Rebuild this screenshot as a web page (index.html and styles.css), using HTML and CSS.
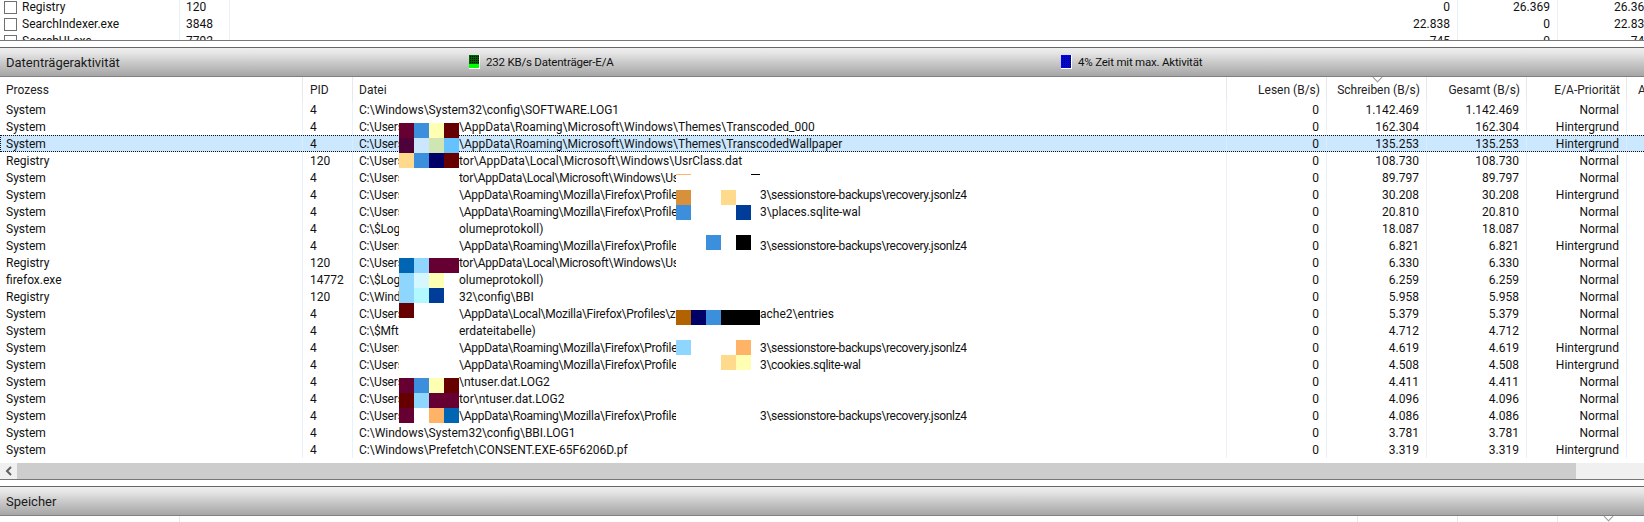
FILE: index.html
```html
<!DOCTYPE html>
<html lang="de">
<head>
<meta charset="utf-8">
<title>Ressourcenmonitor</title>
<link rel="stylesheet" href="styles.css">
</head>
<body>
<div class="app">
  <section class="upper">
    <div class="urow"><span class="chk"></span><span class="uname">Registry</span><span class="upid">120</span><span class="num1">0</span><span class="num2">26.369</span><span class="num3">26.369</span></div>
    <div class="urow"><span class="chk"></span><span class="uname">SearchIndexer.exe</span><span class="upid">3848</span><span class="num1">22.838</span><span class="num2">0</span><span class="num3">22.838</span></div>
    <div class="urow"><span class="chk"></span><span class="uname">SearchUI.exe</span><span class="upid">7792</span><span class="num1">745</span><span class="num2">0</span><span class="num3">745</span></div>
  </section>
  <div class="gap"></div>
  <header class="bar">
    <span class="title">Datenträgeraktivität</span>
    <span class="stat stat-a"><span class="meter meter-green"></span>232 KB/s Datenträger-E/A</span>
    <span class="stat stat-b"><span class="meter meter-blue"></span>4% Zeit mit max. Aktivität</span>
  </header>
  <div class="thead">
    <span class="c-proc">Prozess</span><span class="c-pid">PID</span><span class="c-file">Datei</span><span class="c-n r">Lesen (B/s)</span><span class="c-n r sorted">Schreiben (B/s)</span><span class="c-n r">Gesamt (B/s)</span><span class="c-n r">E/A-Priorität</span><span class="c-last">A</span>
  </div>
  <div class="tbody">
    <div class="trow"><span class="c-proc">System</span><span class="c-pid">4</span><span class="c-file">C:\Windows\System32\config\SOFTWARE.LOG1</span><span class="c-n r">0</span><span class="c-n r">1.142.469</span><span class="c-n r">1.142.469</span><span class="c-n r">Normal</span></div>
    <div class="trow"><span class="c-proc">System</span><span class="c-pid">4</span><span class="c-file"><span class="seg s1">C:\Users</span><span class="seg s2 open">\AppData\Roaming\Microsoft\Windows\Themes\Transcoded_000</span></span><span class="c-n r">0</span><span class="c-n r">162.304</span><span class="c-n r">162.304</span><span class="c-n r">Hintergrund</span></div>
    <div class="trow sel"><span class="c-proc">System</span><span class="c-pid">4</span><span class="c-file"><span class="seg s1">C:\Users</span><span class="seg s2 open">\AppData\Roaming\Microsoft\Windows\Themes\TranscodedWallpaper</span></span><span class="c-n r">0</span><span class="c-n r">135.253</span><span class="c-n r">135.253</span><span class="c-n r">Hintergrund</span></div>
    <div class="trow"><span class="c-proc">Registry</span><span class="c-pid">120</span><span class="c-file"><span class="seg s1">C:\Users</span><span class="seg s2 open">tor\AppData\Local\Microsoft\Windows\UsrClass.dat</span></span><span class="c-n r">0</span><span class="c-n r">108.730</span><span class="c-n r">108.730</span><span class="c-n r">Normal</span></div>
    <div class="trow"><span class="c-proc">System</span><span class="c-pid">4</span><span class="c-file"><span class="seg s1">C:\Users</span><span class="seg s2">tor\AppData\Local\Microsoft\Windows\UsrClass.dat</span></span><span class="c-n r">0</span><span class="c-n r">89.797</span><span class="c-n r">89.797</span><span class="c-n r">Normal</span></div>
    <div class="trow"><span class="c-proc">System</span><span class="c-pid">4</span><span class="c-file"><span class="seg s1">C:\Users</span><span class="seg s2">\AppData\Roaming\Mozilla\Firefox\Profiles</span><span class="seg s3 tight">3\sessionstore-backups\recovery.jsonlz4</span></span><span class="c-n r">0</span><span class="c-n r">30.208</span><span class="c-n r">30.208</span><span class="c-n r">Hintergrund</span></div>
    <div class="trow"><span class="c-proc">System</span><span class="c-pid">4</span><span class="c-file"><span class="seg s1">C:\Users</span><span class="seg s2">\AppData\Roaming\Mozilla\Firefox\Profiles</span><span class="seg s3">3\places.sqlite-wal</span></span><span class="c-n r">0</span><span class="c-n r">20.810</span><span class="c-n r">20.810</span><span class="c-n r">Normal</span></div>
    <div class="trow"><span class="c-proc">System</span><span class="c-pid">4</span><span class="c-file"><span class="seg s1">C:\$LogFile</span><span class="seg s2 open">olumeprotokoll)</span></span><span class="c-n r">0</span><span class="c-n r">18.087</span><span class="c-n r">18.087</span><span class="c-n r">Normal</span></div>
    <div class="trow"><span class="c-proc">System</span><span class="c-pid">4</span><span class="c-file"><span class="seg s1">C:\Users</span><span class="seg s2">\AppData\Roaming\Mozilla\Firefox\Profiles</span><span class="seg s3 tight">3\sessionstore-backups\recovery.jsonlz4</span></span><span class="c-n r">0</span><span class="c-n r">6.821</span><span class="c-n r">6.821</span><span class="c-n r">Hintergrund</span></div>
    <div class="trow"><span class="c-proc">Registry</span><span class="c-pid">120</span><span class="c-file"><span class="seg s1">C:\Users</span><span class="seg s2">tor\AppData\Local\Microsoft\Windows\UsrClass.dat</span></span><span class="c-n r">0</span><span class="c-n r">6.330</span><span class="c-n r">6.330</span><span class="c-n r">Normal</span></div>
    <div class="trow"><span class="c-proc">firefox.exe</span><span class="c-pid">14772</span><span class="c-file"><span class="seg s1">C:\$LogFile</span><span class="seg s2 open">olumeprotokoll)</span></span><span class="c-n r">0</span><span class="c-n r">6.259</span><span class="c-n r">6.259</span><span class="c-n r">Normal</span></div>
    <div class="trow"><span class="c-proc">Registry</span><span class="c-pid">120</span><span class="c-file"><span class="seg s1">C:\Windows</span><span class="seg s2 open">32\config\BBI</span></span><span class="c-n r">0</span><span class="c-n r">5.958</span><span class="c-n r">5.958</span><span class="c-n r">Normal</span></div>
    <div class="trow"><span class="c-proc">System</span><span class="c-pid">4</span><span class="c-file"><span class="seg s1">C:\Users</span><span class="seg s2">\AppData\Local\Mozilla\Firefox\Profiles\zc</span><span class="seg s3">ache2\entries</span></span><span class="c-n r">0</span><span class="c-n r">5.379</span><span class="c-n r">5.379</span><span class="c-n r">Normal</span></div>
    <div class="trow"><span class="c-proc">System</span><span class="c-pid">4</span><span class="c-file"><span class="seg s1">C:\$Mft</span><span class="seg s2 open">erdateitabelle)</span></span><span class="c-n r">0</span><span class="c-n r">4.712</span><span class="c-n r">4.712</span><span class="c-n r">Normal</span></div>
    <div class="trow"><span class="c-proc">System</span><span class="c-pid">4</span><span class="c-file"><span class="seg s1">C:\Users</span><span class="seg s2">\AppData\Roaming\Mozilla\Firefox\Profiles</span><span class="seg s3 tight">3\sessionstore-backups\recovery.jsonlz4</span></span><span class="c-n r">0</span><span class="c-n r">4.619</span><span class="c-n r">4.619</span><span class="c-n r">Hintergrund</span></div>
    <div class="trow"><span class="c-proc">System</span><span class="c-pid">4</span><span class="c-file"><span class="seg s1">C:\Users</span><span class="seg s2">\AppData\Roaming\Mozilla\Firefox\Profiles</span><span class="seg s3 tight">3\cookies.sqlite-wal</span></span><span class="c-n r">0</span><span class="c-n r">4.508</span><span class="c-n r">4.508</span><span class="c-n r">Hintergrund</span></div>
    <div class="trow"><span class="c-proc">System</span><span class="c-pid">4</span><span class="c-file"><span class="seg s1">C:\Users</span><span class="seg s2 open">\ntuser.dat.LOG2</span></span><span class="c-n r">0</span><span class="c-n r">4.411</span><span class="c-n r">4.411</span><span class="c-n r">Normal</span></div>
    <div class="trow"><span class="c-proc">System</span><span class="c-pid">4</span><span class="c-file"><span class="seg s1">C:\Users</span><span class="seg s2 open">tor\ntuser.dat.LOG2</span></span><span class="c-n r">0</span><span class="c-n r">4.096</span><span class="c-n r">4.096</span><span class="c-n r">Normal</span></div>
    <div class="trow"><span class="c-proc">System</span><span class="c-pid">4</span><span class="c-file"><span class="seg s1">C:\Users</span><span class="seg s2">\AppData\Roaming\Mozilla\Firefox\Profiles</span><span class="seg s3 tight">3\sessionstore-backups\recovery.jsonlz4</span></span><span class="c-n r">0</span><span class="c-n r">4.086</span><span class="c-n r">4.086</span><span class="c-n r">Normal</span></div>
    <div class="trow"><span class="c-proc">System</span><span class="c-pid">4</span><span class="c-file">C:\Windows\System32\config\BBI.LOG1</span><span class="c-n r">0</span><span class="c-n r">3.781</span><span class="c-n r">3.781</span><span class="c-n r">Normal</span></div>
    <div class="trow"><span class="c-proc">System</span><span class="c-pid">4</span><span class="c-file">C:\Windows\Prefetch\CONSENT.EXE-65F6206D.pf</span><span class="c-n r">0</span><span class="c-n r">3.319</span><span class="c-n r">3.319</span><span class="c-n r">Hintergrund</span></div>

    <div class="mos mos-a"><i class="p"></i><i class="b"></i><i class="y"></i><i class="m"></i><i class="d"></i><i class="lb"></i><i class="g"></i><i class="s"></i><i class="o"></i><i class="b"></i><i class="n"></i><i class="m"></i></div>
    <div class="mos mos-b"><i class="c"></i><i class="sk"></i><i class="p"></i><i class="p"></i><i class="sk"></i><i class="pb"></i><i class="y"></i><i></i><i class="sk"></i><i class="cy"></i><i class="t"></i><i></i><i class="m"></i></div>
    <div class="mos mos-c"><i class="p"></i><i class="b"></i><i class="y"></i><i class="m"></i><i class="m"></i><i class="sk"></i><i class="p"></i><i class="p"></i><i class="p"></i><i></i><i class="po"></i><i class="c"></i></div>
    <div class="mos mos-d"><i class="or"></i><i></i><i></i><i class="o"></i><i></i><i class="b"></i><i></i><i></i><i></i><i class="t"></i></div>
    <div class="mos mos-e"><i></i><i></i><i class="b"></i><i></i><i class="k"></i></div>
    <div class="mos mos-f"><i class="br"></i><i class="n"></i><i class="b"></i><i class="k"></i><i class="k long"></i></div>
    <div class="mos mos-g"><i class="sk"></i><i></i><i></i><i></i><i class="po"></i><i></i><i></i><i></i><i class="o"></i><i class="y"></i></div>
    <span class="line line-o"></span><span class="line line-k"></span>
  </div>
  <div class="scroll"><span class="arrow"><svg width="9" height="10" viewBox="0 0 9 10"><path d="M7 1 3 5l4 4" fill="none" stroke="#606060" stroke-width="2"/></svg></span><span class="thumb"></span><span class="rest"></span></div>
  <div class="gap"></div>
  <header class="bar"><span class="title">Speicher</span></header>
  <div class="lower"><span class="l1"></span><span class="l2"></span><span class="l3"></span><span class="l4"></span><span class="l5"></span></div>
</div>
</body>
</html>
```
FILE: styles.css
```css
* { box-sizing: border-box; }
html, body { margin: 0; height: 100%; background: #fff; overflow: hidden; }
body { font: 12px/17px Roboto, "Noto Sans", sans-serif; color: #111; }
.app { width: 1644px; height: 522px; overflow: hidden; }

/* upper table, scrolled so that only three rows show */
.upper { height: 40px; overflow: hidden; }
.urow { display: flex; width: 1700px; height: 17px; line-height: 19px; white-space: nowrap; }
.urow:first-child { margin-top: -2px; }
.urow span { display: block; flex: none; }
.chk { width: 13px; height: 13px; margin: 3px 5px 0 4px; border: 1px solid #707070; background: #fff; }
.uname { width: 158px; border-right: 1px solid #e9f1fb; }
.upid { width: 50px; padding-left: 6px; border-right: 1px solid #e9f1fb; }
.num1 { width: 1228px; text-align: right; padding-right: 7px; border-right: 1px solid #e9f1fb; }
.num2 { width: 100px; text-align: right; padding-right: 7px; border-right: 1px solid #e9f1fb; }
.num3 { width: 100px; text-align: right; padding-right: 7px; }

.gap { height: 8px; border-top: 1px solid #777; border-bottom: 1px solid #666; }
.bar { display: flex; align-items: center; height: 29px; border-bottom: 1px solid #808080;
  background: linear-gradient(#efefef 0, #e4e4e4 20%, #cfcfcf 45%, #b8b8b8 75%, #a6a6a6 100%); }
.title { width: 469px; padding-left: 6px; flex: none; font-size: 13px; color: #1a1a1a; }
.stat { display: flex; align-items: center; font-size: 11.5px; letter-spacing: -0.2px; }
.stat-a { width: 592px; flex: none; }
.meter { width: 11px; height: 14px; margin-right: 6px; border: solid #fff; border-width: 0 1px 1px 0; background-color: #000; flex: none; }
.meter-green { background-image:
  linear-gradient(#00ff00, #00ff00),
  repeating-linear-gradient(90deg, #006400 0 1px, transparent 1px 2px),
  repeating-linear-gradient(#006400 0 1px, transparent 1px 2px);
  background-size: 100% 4px, auto, auto; background-position: bottom, 0 0, 0 0; background-repeat: no-repeat, repeat, repeat; }
.meter-blue { background-image:
  repeating-linear-gradient(90deg, #0000ff 0 1px, transparent 1px 2px),
  repeating-linear-gradient(#0000ff 0 1px, transparent 1px 2px); }

.thead, .trow { display: flex; width: 1700px; white-space: nowrap; }
.thead { height: 24px; line-height: 27px; color: #222; }
.thead > span, .trow > span { flex: none; display: block; }
.c-proc { width: 303px; padding-left: 6px; border-right: 1px solid #e8e8e8; }
.c-pid { width: 50px; padding-left: 7px; border-right: 1px solid #e8e8e8; }
.c-file { width: 874px; padding-left: 6px; border-right: 1px solid #e8e8e8; overflow: hidden; }
.c-n { width: 100px; padding-right: 6px; border-right: 1px solid #e8e8e8; }
.c-last { padding-left: 11px; }
.r { text-align: right; }
.sorted { position: relative; }
.sorted::before { content: ""; position: absolute; left: 47px; top: -3px; width: 6px; height: 6px; border-right: 1px solid #999; border-bottom: 1px solid #999; transform: rotate(45deg); }

.tbody { height: 362px; position: relative; overflow: hidden; }
.trow { height: 17px; line-height: 19px; }
.trow > span { border-right-color: #e9f1fb; }
.trow.sel { background: #cce8ff; outline: 1px dotted #111; outline-offset: -1px; }
.trow.sel > span { border-right-color: #dcecfb; }
.trow .c-n { padding-right: 7px; }
/* path pieces either side of the blanked-out parts */
.seg { display: inline-block; overflow: hidden; vertical-align: top; height: 17px; white-space: pre; }
.s1 { width: 40px; letter-spacing: -0.2px; }
.s2 { width: 217px; margin-left: 60px; letter-spacing: -0.25px; }
.s2.open { width: auto; overflow: visible; letter-spacing: 0; }
.s3 { margin-left: 84px; }
.s3.tight { letter-spacing: -0.33px; }

/* redaction mosaics lying over the table */
.mos { position: absolute; display: grid; grid-auto-rows: 15px; }
.mos i { display: block; }
.mos-a, .mos-b, .mos-c { left: 399px; grid-template-columns: repeat(4, 15px); }
.mos-d, .mos-e, .mos-f, .mos-g { left: 676px; grid-template-columns: repeat(5, 15px); }
.mos-a { top: 22px; }
.mos-b { top: 157px; }
.mos-c { top: 277px; }
.mos-d { top: 89px; }
.mos-e { top: 134px; }
.mos-f { top: 209px; }
.mos-g { top: 239px; }
.long { width: 24px; }
.line { position: absolute; top: 73px; height: 1px; }
.line-o { left: 676px; width: 15px; background: #ffb366; }
.line-k { left: 751px; width: 9px; background: #000; }
.p { background: #660033; } .b { background: #3b8fdc; } .y { background: #ffffb3; } .m { background: #660000; }
.d { background: #4d0039; } .lb { background: #cce6ff; } .g { background: #cfe6b3; } .s { background: #66c2ff; }
.o { background: #ffd98c; } .n { background: #000066; } .or { background: #d9903a; } .t { background: #003d99; }
.k { background: #000; } .c { background: #0066b3; } .sk { background: #8fd6ff; } .pb { background: #d6f7ff; }
.cy { background: #b3f7ff; } .br { background: #b36200; } .po { background: #ffb366; }

.scroll { display: flex; height: 16px; background: #f0f0f0; }
.arrow { width: 17px; display: flex; align-items: center; justify-content: center; flex: none; }
.thumb { width: 1559px; background: #cdcdcd; flex: none; }
.rest { flex: 1; }

.lower { display: flex; height: 6px; }
.lower span { display: block; flex: none; border-right: 1px solid #e8e8e8; }
.l1 { width: 180px; }
.l2 { width: 1178px; }
.l3, .l4 { width: 100px; }
.l5 { width: 86px; position: relative; border-right: 0 !important; }
.l5::before { content: ""; position: absolute; left: 47px; top: -3px; width: 6px; height: 6px; border-right: 1px solid #999; border-bottom: 1px solid #999; transform: rotate(45deg); }
```
